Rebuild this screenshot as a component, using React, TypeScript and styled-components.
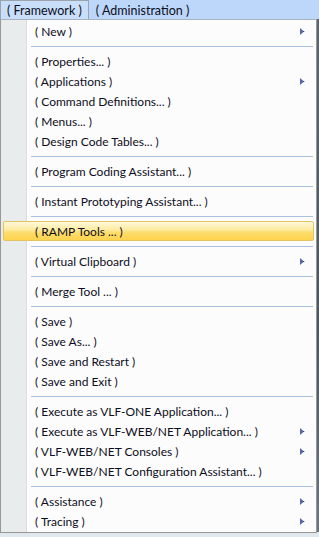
import * as React from 'react';
import styled, { createGlobalStyle } from 'styled-components';

const GlobalStyle = createGlobalStyle`
    html, body {
        margin: 0;
        padding: 0;
        background: #dfe7ef;
    }
    * {
        box-sizing: border-box;
    }
`;

type Entry = { label: string; sub?: boolean; active?: boolean } | 'sep';

const entries: Entry[] = [
    { label: '( New )', sub: true },
    'sep',
    { label: '( Properties... )' },
    { label: '( Applications )', sub: true },
    { label: '( Command Definitions... )' },
    { label: '( Menus... )' },
    { label: '( Design Code Tables... )' },
    'sep',
    { label: '( Program Coding Assistant... )' },
    'sep',
    { label: '( Instant Prototyping Assistant... )' },
    'sep',
    { label: '( RAMP Tools ... )', active: true },
    'sep',
    { label: '( Virtual Clipboard )', sub: true },
    'sep',
    { label: '( Merge Tool ... )' },
    'sep',
    { label: '( Save )' },
    { label: '( Save As... )' },
    { label: '( Save and Restart )' },
    { label: '( Save and Exit )' },
    'sep',
    { label: '( Execute as VLF-ONE Application... )' },
    { label: '( Execute as VLF-WEB/NET Application... )', sub: true },
    { label: '( VLF-WEB/NET Consoles )', sub: true },
    { label: '( VLF-WEB/NET Configuration Assistant... )' },
    'sep',
    { label: '( Assistance )', sub: true },
    { label: '( Tracing )', sub: true },
];

const Page = styled.div`
    width: 319px;
    height: 537px;
    overflow: hidden;
    display: flex;
    flex-direction: column;
    font-family: Lato, 'Noto Sans', sans-serif;
    font-size: 12px;
    color: #0d0d22;
`;

const MenuBar = styled.div`
    height: 19px;
    flex: none;
    display: flex;
    background: #bcd7fa;
    font-size: 12.5px;
`;

const BarItem = styled.div<{ $open?: boolean }>`
    height: 19px;
    display: flex;
    align-items: center;
    padding: 0 6px 0 6px;
    border: 1px solid ${(p) => (p.$open ? '#9ba3ad' : 'transparent')};
    border-bottom: none;
    background: ${(p) => (p.$open ? '#c8def9' : 'transparent')};
    white-space: nowrap;
`;

const Body = styled.div`
    flex: 1;
    display: flex;
    align-items: flex-start;
`;

const Menu = styled.div`
    width: 317px;
    flex: none;
    display: flex;
    flex-direction: column;
    padding: 1px 2px 1px 2px;
    border: 1px solid #979797;
    border-top-color: #a9b3bd;
    background: linear-gradient(
        to right,
        #e9eced 0,
        #e9eced 25px,
        #dadddf 25px,
        #dadddf 26px,
        #ffffff 26px,
        #ffffff 27px,
        #fcfcfc 27px
    );
`;

const Backdrop = styled.div`
    flex: 1;
    align-self: stretch;
    height: 513px;
    background: linear-gradient(to bottom, #5d6670, #4d5660 60%, #6c7580);
`;

const Item = styled.div<{ $active?: boolean }>`
    height: 20px;
    display: flex;
    align-items: center;
    justify-content: space-between;
    padding: 0 8px 0 31px;
    border: 1px solid ${(p) => (p.$active ? '#e5c365' : 'transparent')};
    border-radius: 2px;
    background: ${(p) =>
        p.$active
            ? 'linear-gradient(to bottom, #fff8d9 0%, #fdeca5 40%, #fcdc6a 60%, #ffd44e 100%)'
            : 'transparent'};
    white-space: nowrap;
`;

const Separator = styled.div`
    height: 10px;
    display: flex;
    align-items: center;
    padding: 0 1px 0 28px;

    &::after {
        content: '';
        flex: 1;
        height: 1px;
        background: #a8c0dc;
    }
`;

const Arrow = () => (
    <svg width="5" height="7" viewBox="0 0 5 7">
        <path d="M0 0 L4 3.5 L0 7 Z" fill="#5667a9" />
        <path d="M3 3 L5 3.5 L3 4 Z" fill="#2c2c4c" />
    </svg>
);

const App: React.FC = () => (
    <Page>
        <GlobalStyle />
        <MenuBar>
            <BarItem $open>( Framework )</BarItem>
            <BarItem>( Administration )</BarItem>
        </MenuBar>
        <Body>
            <Menu>
                {entries.map((e, i) =>
                    e === 'sep' ? (
                        <Separator key={i} />
                    ) : (
                        <Item key={i} $active={e.active}>
                            <span>{e.label}</span>
                            {e.sub && <Arrow />}
                        </Item>
                    ),
                )}
            </Menu>
            <Backdrop />
        </Body>
    </Page>
);

export default App;
